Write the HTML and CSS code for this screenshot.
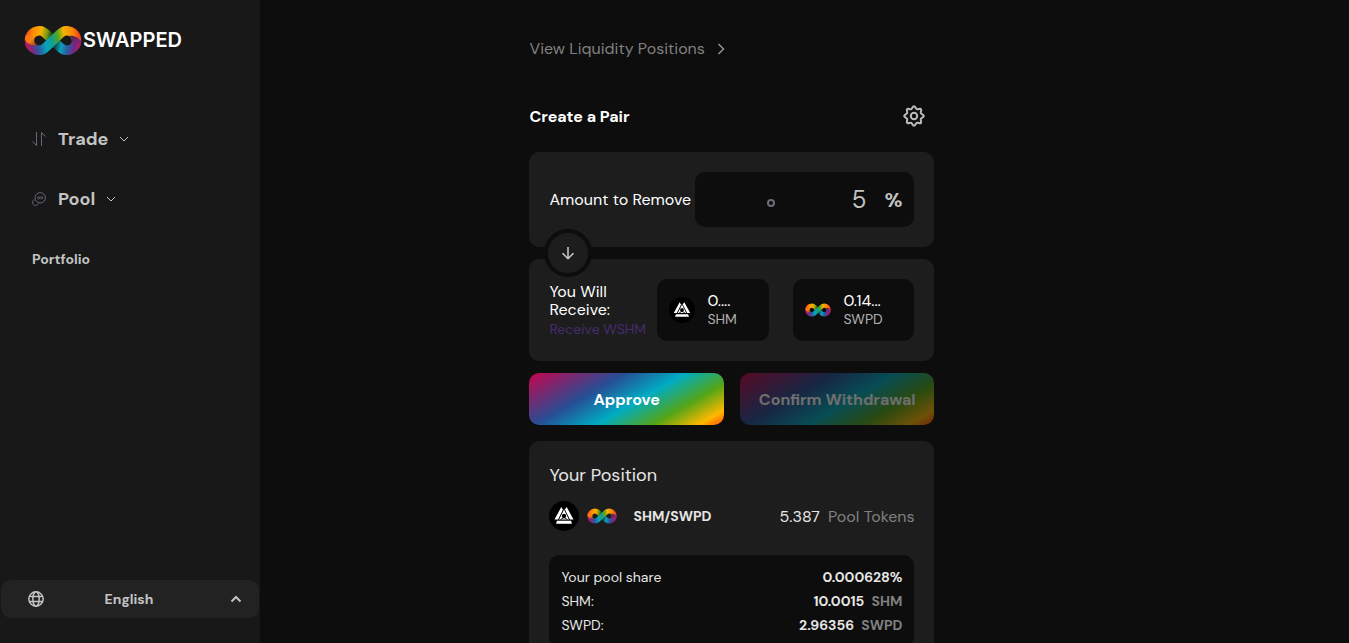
FILE: index.html
```
<!DOCTYPE html>
<html lang="en">
<head>
  <meta charset="UTF-8">
  <meta name="viewport" content="width=device-width, initial-scale=1">
  <title>Swapped | Remove liquidity</title>
  <link rel="stylesheet" href="styles.css">
</head>
<body>
  <!-- Shared symbols -->
  <svg class="sprite" width="0" height="0" aria-hidden="true">
    <defs>
      <linearGradient id="ribbonBack" gradientUnits="userSpaceOnUse" x1="1" y1="8" x2="57" y2="20">
        <stop offset="0" stop-color="#f0391f"/>
        <stop offset="0.12" stop-color="#ff8a05"/>
        <stop offset="0.27" stop-color="#f9b000"/>
        <stop offset="0.38" stop-color="#6b9a12"/>
        <stop offset="0.46" stop-color="#23480f"/>
        <stop offset="0.56" stop-color="#064a58"/>
        <stop offset="0.66" stop-color="#0b9fb8"/>
        <stop offset="0.78" stop-color="#2a5ca2"/>
        <stop offset="0.89" stop-color="#6c2c86"/>
        <stop offset="1" stop-color="#c3105f"/>
      </linearGradient>
      <linearGradient id="ribbonFront" gradientUnits="userSpaceOnUse" x1="1" y1="20" x2="57" y2="8">
        <stop offset="0" stop-color="#d3104f"/>
        <stop offset="0.12" stop-color="#7b2a85"/>
        <stop offset="0.22" stop-color="#2d57a0"/>
        <stop offset="0.36" stop-color="#05a5bd"/>
        <stop offset="0.49" stop-color="#12a08c"/>
        <stop offset="0.6" stop-color="#58a51c"/>
        <stop offset="0.71" stop-color="#f3b500"/>
        <stop offset="0.86" stop-color="#ff8a05"/>
        <stop offset="1" stop-color="#f0301f"/>
      </linearGradient>
      <linearGradient id="foldWarm" x1="0" y1="0" x2="1" y2="1">
        <stop offset="0" stop-color="#ff6a12"/>
        <stop offset="0.5" stop-color="#f98210"/>
        <stop offset="1" stop-color="#8a3a10"/>
      </linearGradient>
      <linearGradient id="foldCool" x1="0" y1="0" x2="1" y2="1">
        <stop offset="0" stop-color="#5a1c30"/>
        <stop offset="0.5" stop-color="#6c2878"/>
        <stop offset="1" stop-color="#b01a66"/>
      </linearGradient>
      <symbol id="swpd" viewBox="0 0 58 29">
        <g fill="none" stroke-width="9.4">
          <path stroke="url(#ribbonBack)" d="M5.400 14.500A9.600 9.600 0 0 1 21.600 7.500L36.400 21.500A9.600 9.600 0 0 0 52.600 14.500"/>
          <path stroke="url(#ribbonFront)" d="M5.400 14.500A9.600 9.600 0 0 0 21.600 21.500L36.400 7.500A9.600 9.600 0 0 1 52.600 14.500"/>
        </g>
        <path fill="url(#foldWarm)" d="M.8 13C3 18 8 20 13.500 19.200C11 18.300 9.900 16.500 10.100 13.500L8 9L2 9Z"/>
        <path fill="url(#foldCool)" d="M57.200 16C55 11 50 9 44.500 9.800C47 10.700 48.100 12.500 47.900 15.500L50 20L56 20Z"/>
      </symbol>
      <symbol id="shm" viewBox="0 0 30 30">
        <circle cx="15" cy="15" r="15" fill="#000"/>
        <path fill="#fff" d="M12.300 6L14 9L9.300 18.500H5.500ZM17.700 6L24.500 18.500H20.700L15.500 9ZM15 8L20.200 18.500H9.800ZM8 19.800H22L23 22.800H7Z"/>
        <circle cx="15" cy="15" r="2.200" fill="#000"/>
        <path fill="none" stroke="#000" stroke-width=".9" d="M14.600 8.500L9.500 18.700M15.400 8.500L20.500 18.700M11.500 18.500L15 16.500L18.500 18.500"/>
      </symbol>
    </defs>
  </svg>

  <div class="layout">
    <aside class="sidebar">
      <a class="brand" href="#">
        <svg class="brand-mark" aria-hidden="true"><use href="#swpd"/></svg>
        <span>SWAPPED</span>
      </a>

      <nav class="menu">
        <button class="menu-item" type="button">
          <svg width="14" height="14" viewBox="0 0 14 14" fill="none" stroke="#666a76" aria-hidden="true"><path d="M.5 9.500L4.500 13.500V0M13.500 4.500L9.500.5V14"/></svg>
          <span>Trade</span>
          <svg class="chevron" width="8" height="8" viewBox="0 0 8 8" aria-hidden="true"><path d="M0 2L4 6L8 2"/></svg>
        </button>
        <button class="menu-item" type="button">
          <svg width="14" height="14" viewBox="0 0 14 14" fill="none" stroke="#666a76" aria-hidden="true">
            <circle cx="8.200" cy="5.800" r="5.200"/>
            <path d="M2.200 7.500C.5 8.500.2 11 1.200 12.400C2.500 14 5.500 13.800 6.500 11.500"/>
            <path d="M8.200 5.800C7 4 5.700 4.600 5.700 5.800S7 7.600 8.200 5.800C9.400 4 10.700 4.600 10.700 5.800S9.400 7.600 8.200 5.800Z"/>
          </svg>
          <span>Pool</span>
          <svg class="chevron" width="8" height="8" viewBox="0 0 8 8" aria-hidden="true"><path d="M0 2L4 6L8 2"/></svg>
        </button>
        <a class="menu-link" href="#">Portfolio</a>
      </nav>

      <button class="language" type="button">
        <svg width="16" height="16" viewBox="0 0 16 16" fill="none" stroke="#c3c3c3" stroke-width="1.500" aria-hidden="true">
          <circle cx="8" cy="8" r="7.200"/>
          <ellipse cx="8" cy="8" rx="3.200" ry="7.200"/>
          <path d="M1.300 5.500H14.700M1.300 10.500H14.700"/>
        </svg>
        <span>English</span>
        <svg width="12" height="8" viewBox="0 0 12 8" fill="none" stroke="#c3c3c3" stroke-width="2" aria-hidden="true"><path d="M1.500 6.500L6 2L10.500 6.500"/></svg>
      </button>
    </aside>

    <main class="main">
      <div class="content">
        <a class="positions-link" href="#">
          View Liquidity Positions
          <svg width="8" height="12" viewBox="0 0 8 12" fill="none" stroke="#929292" stroke-width="1.500" aria-hidden="true"><path d="M1.500 1L6.500 6L1.500 11"/></svg>
        </a>

        <header class="title-row">
          <h1>Create a Pair</h1>
          <button class="settings" type="button" aria-label="Settings">
            <svg width="22" height="22" viewBox="0 0 22 22" fill="none" stroke="#bdbdbd" stroke-width="2" stroke-linejoin="round" aria-hidden="true">
              <path d="M11 1.200C12.500 1.200 12.600 3.700 14 4.200C15.400 4.700 17 3.100 18 4.100S17.300 6.600 17.800 8C18.300 9.400 20.800 9.500 20.800 11S18.300 12.600 17.800 14C17.300 15.400 18.900 17 17.900 18S15.400 17.300 14 17.800C12.600 18.300 12.500 20.800 11 20.800S9.400 18.300 8 17.800C6.600 17.300 5.100 18.900 4.100 17.900S4.700 15.400 4.200 14C3.700 12.600 1.200 12.500 1.200 11S3.700 9.400 4.200 8C4.700 6.600 3.100 5.100 4.100 4.100S6.600 4.700 8 4.200C9.400 3.700 9.500 1.200 11 1.200Z"/>
              <circle cx="11" cy="11" r="3.200"/>
            </svg>
          </button>
        </header>

        <section class="card amount">
          <label for="amount">Amount to Remove</label>
          <div class="amount-box">
            <input class="amount-slider" type="range" min="0" max="100" value="5" aria-label="Percentage slider">
            <input class="amount-input" id="amount" type="text" inputmode="numeric" value="5">
            <span class="percent">%</span>
          </div>
          <span class="arrow">
            <svg width="14" height="14" viewBox="0 0 14 14" fill="none" stroke="#c3c3c3" stroke-width="1.600" aria-hidden="true"><path d="M7 1V12.500M1.500 7.200L7 12.700L12.500 7.200"/></svg>
          </span>
        </section>

        <section class="card receive">
          <div class="receive-label">
            <p>You Will Receive:</p>
            <a href="#">Receive WSHM</a>
          </div>
          <div class="token">
            <svg class="token-icon" aria-hidden="true"><use href="#shm"/></svg>
            <div>
              <p>0....</p>
              <small>SHM</small>
            </div>
          </div>
          <div class="token token-wide">
            <svg class="token-icon" aria-hidden="true"><use href="#swpd"/></svg>
            <div>
              <p>0.14...</p>
              <small>SWPD</small>
            </div>
          </div>
        </section>

        <div class="actions">
          <button class="btn" type="button">Approve</button>
          <button class="btn" type="button" disabled>Confirm Withdrawal</button>
        </div>

        <section class="card position">
          <h2>Your Position</h2>
          <div class="pair">
            <svg class="pair-icon" aria-hidden="true"><use href="#shm"/></svg>
            <svg class="pair-icon" aria-hidden="true"><use href="#swpd"/></svg>
            <strong>SHM/SWPD</strong>
            <span class="pool-tokens">5.387 <span class="muted">Pool Tokens</span></span>
          </div>
          <dl class="stats">
            <div>
              <dt>Your pool share</dt>
              <dd>0.000628%</dd>
            </div>
            <div>
              <dt>SHM:</dt>
              <dd>10.0015 <span class="muted">SHM</span></dd>
            </div>
            <div>
              <dt>SWPD:</dt>
              <dd>2.96356 <span class="muted">SWPD</span></dd>
            </div>
          </dl>
        </section>
      </div>
    </main>
  </div>
</body>
</html>
```
FILE: styles.css
```
* {
  box-sizing: border-box;
}

html {
  scrollbar-width: none;
}

body {
  margin: 0;
  background: #0d0d0d;
  color: #fff;
  font-family: "DM Sans", Inter, sans-serif;
  font-size: 16px;
}

h1, h2, p, dl, dd {
  margin: 0;
}

a {
  color: inherit;
  text-decoration: none;
}

button, input {
  padding: 0;
  border: 0;
  background: none;
  color: inherit;
  font: inherit;
}

button {
  cursor: pointer;
}

.sprite {
  position: absolute;
}

.layout {
  display: flex;
  align-items: flex-start;
}

/* Sidebar */
.sidebar {
  position: sticky;
  top: 0;
  display: flex;
  flex-direction: column;
  flex: 0 0 260px;
  height: 100vh;
  padding: 24px 1px 25px;
  background: #181818;
  color: #c3c3c3;
}

.brand {
  display: flex;
  align-items: center;
  gap: 1px;
  height: 32px;
  padding-left: 23px;
  color: #fff;
  font-family: Inter, sans-serif;
  font-size: 20px;
  font-weight: 600;
}

.brand-mark {
  width: 58px;
  height: 29px;
}

.menu {
  display: flex;
  flex-direction: column;
  align-items: flex-start;
  gap: 36px;
  padding: 71px 31px 0;
}

.menu-item {
  display: flex;
  align-items: center;
  gap: 12px;
  font-size: 18px;
  font-weight: 700;
  line-height: 24px;
}

.chevron {
  fill: none;
  stroke: #c3c3c3;
}

.menu-link {
  font-size: 14px;
  font-weight: 700;
  line-height: 24px;
}

.language {
  display: grid;
  grid-template-columns: 16px 1fr 12px;
  align-items: center;
  height: 38px;
  margin-top: auto;
  padding: 0 17px 0 27px;
  border-radius: 10px;
  background: #222;
  font-size: 14px;
  font-weight: 700;
}

.language span {
  padding-right: 16px;
}

/* Main column */
.main {
  display: grid;
  grid-template-columns: 13fr minmax(0, 405px) 20fr;
  flex: 1;
}

.content {
  grid-column: 2;
  padding: 37px 0 36px;
}

.positions-link {
  display: flex;
  align-items: center;
  gap: 12px;
  color: #808080;
  line-height: 24px;
}

.title-row {
  display: flex;
  align-items: center;
  justify-content: space-between;
  height: 32px;
  margin: 39px 0 20px;
  padding-right: 9px;
}

h1 {
  font-size: 16px;
  font-weight: 700;
}

.settings {
  display: flex;
}

.card {
  padding: 20px;
  border-radius: 10px;
  background: #1d1d1d;
}

.amount {
  position: relative;
  display: flex;
  align-items: center;
  justify-content: space-between;
  white-space: nowrap;
}

.amount-box {
  display: flex;
  align-items: center;
  justify-content: flex-end;
  width: 60%;
  height: 55px;
  padding: 0 12px;
  border-radius: 10px;
  background: #0d0d0d;
  color: #c3c3c3;
}

.amount-slider {
  appearance: none;
  width: 64px;
  margin: 0;
  padding-top: 6px;
}

.amount-slider::-webkit-slider-thumb {
  appearance: none;
  width: 8px;
  height: 8px;
  border: 2px solid #6d6d79;
  border-radius: 50%;
}

.amount-input {
  width: 38px;
  font-size: 24px;
  font-weight: 400;
  text-align: right;
}

.percent {
  width: 36px;
  font-size: 20px;
  font-weight: 700;
  text-align: right;
}

.arrow {
  position: absolute;
  bottom: -30px;
  left: 15px;
  display: flex;
  align-items: center;
  justify-content: center;
  width: 48px;
  height: 48px;
  border: 4px solid #0d0d0d;
  border-radius: 50%;
  background: #1d1d1d;
}

.receive {
  display: flex;
  align-items: center;
  gap: 24px;
  margin: 12px 0;
}

.receive-label {
  flex: 1;
  margin-right: -24px;
  padding-top: 2px;
  line-height: 18px;
}

.receive-label p {
  width: 80px;
}

.receive-label a {
  color: #452b6d;
  font-size: 14px;
  line-height: 20px;
  white-space: nowrap;
}

.token {
  display: flex;
  align-items: center;
  gap: 12px;
  width: 112px;
  height: 62px;
  padding: 12px;
  border-radius: 10px;
  background: #0d0d0d;
  line-height: 18px;
}

.token-wide {
  width: 121px;
}

.token small {
  display: block;
  color: #b0b0b0;
  font-size: 14px;
}

.token-icon {
  width: 26px;
  height: 26px;
}

.actions {
  display: grid;
  grid-template-columns: 1fr 1fr;
  gap: 16px;
  margin-bottom: 16px;
}

.btn {
  height: 52px;
  border-radius: 10px;
  background: linear-gradient(150deg, #c7044c 0%, #264f96 34%, #00acc1 55%, #54a516 75%, #ffb800 91%, #ff4d00 100%);
  font-weight: 700;
}

.btn:disabled {
  opacity: 0.4;
  cursor: default;
}

.position {
  color: #e6e6e6;
}

h2 {
  font-size: 18px;
  font-weight: 400;
  line-height: 28px;
}

.pair {
  display: flex;
  align-items: center;
  gap: 8px;
  margin: 12px 0 24px;
}

.pair-icon {
  width: 30px;
  height: 30px;
}

.pair strong {
  margin-left: 8px;
  font-size: 14px;
  font-weight: 700;
}

.pool-tokens {
  margin-left: auto;
}

.muted {
  margin-left: 4px;
  color: #808080;
}

.stats {
  padding: 10px 12px;
  border-radius: 10px;
  background: #0d0d0d;
  font-size: 14px;
  line-height: 24px;
}

.stats div {
  display: flex;
  justify-content: space-between;
}

.stats dd {
  font-weight: 700;
}
```
